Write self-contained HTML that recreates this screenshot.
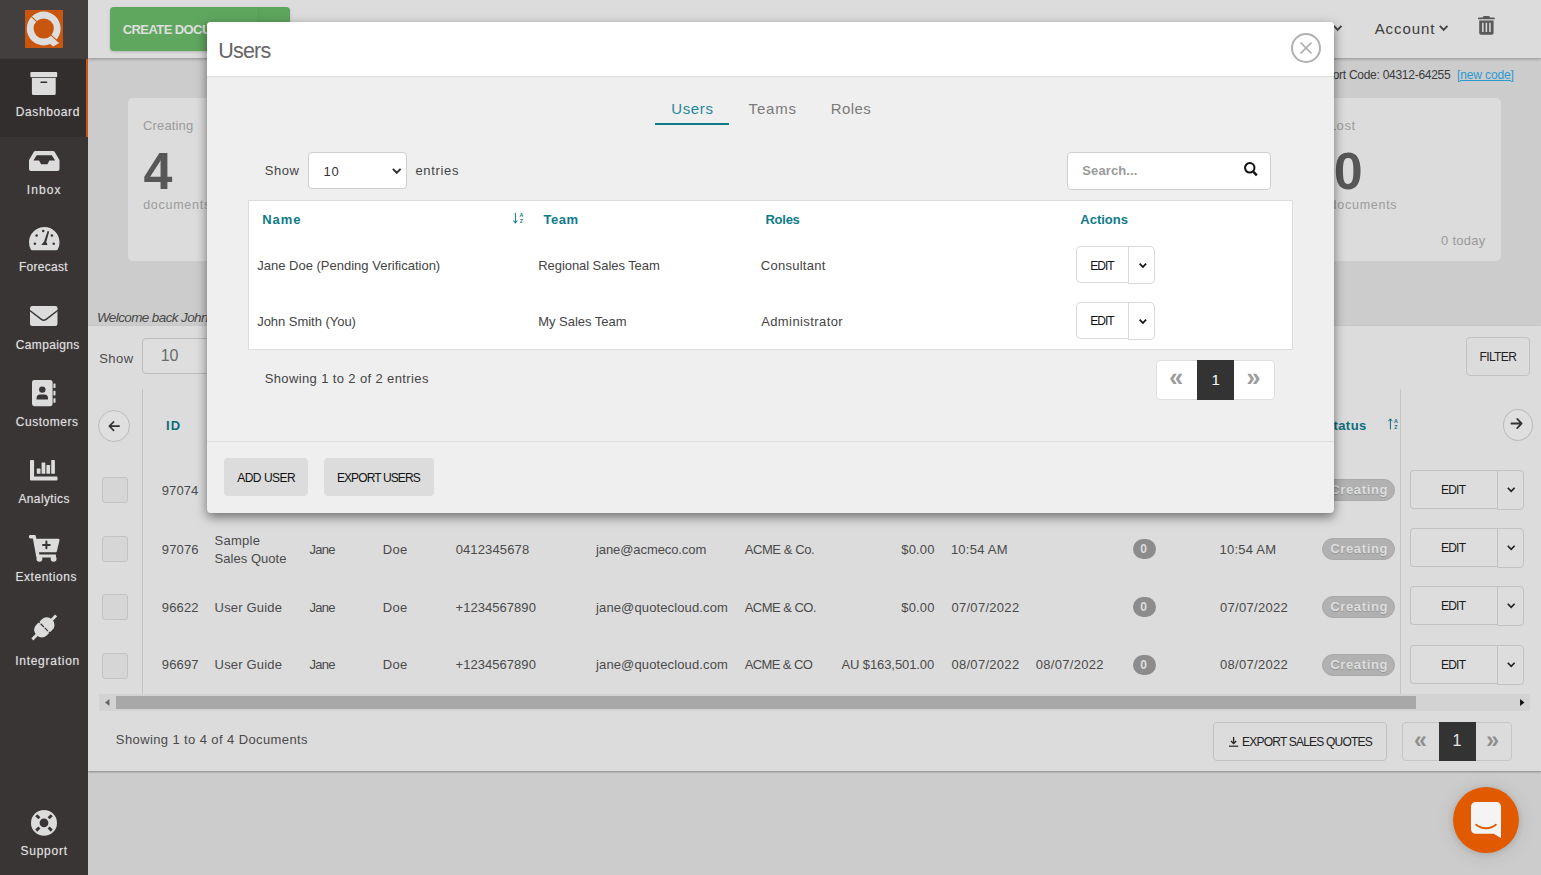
<!DOCTYPE html>
<html lang="en">
<head>
<meta charset="utf-8">
<title>QuoteCloud - Users</title>
<style>
*{box-sizing:border-box}
html,body{margin:0;padding:0}
body{width:1541px;height:875px;overflow:hidden;position:relative;background:#cccccc;font-family:"Liberation Sans", Arial, sans-serif;font-size:13px;color:#444}
.t{position:absolute;white-space:pre;line-height:1;display:block}
svg{position:absolute;display:block;overflow:visible}
#sidebar{position:absolute;left:0;top:0;width:88px;height:875px;background:#383534}
#sidebar .logo{position:absolute;left:0;top:0;width:88px;height:59px;background:#433f3e}
#sidebar .active-bg{position:absolute;left:0;top:59px;width:88px;height:78px;background:#312e2d;border-right:2px solid #c8560e}
.nav-item{display:block}
#topbar{position:absolute;left:88px;top:0;width:1453px;height:58px;background:#dcdcdc;box-shadow:0 1px 3px rgba(0,0,0,.3)}
.hcontent{position:absolute;left:-88px;top:0;width:0;height:0}
.btn-create{position:absolute;left:110px;top:7px;width:180px;height:44px;border-radius:4px;background:#5fa65f;box-shadow:0 1px 3px rgba(0,0,0,.18)}
.btn-create i{position:absolute;left:148px;top:0;width:32px;height:44px;background:rgba(0,0,0,.012);border-left:1px solid rgba(0,0,0,.045);border-radius:0 4px 4px 0}
.card{position:absolute;top:98px;height:163px;background:#dcdcdc;border-radius:5px}
#panel{position:absolute;left:88px;top:326px;width:1453px;height:445px;background:#dcdcdc;box-shadow:0 1px 2px rgba(0,0,0,.35)}
.pcontent{position:absolute;left:-88px;top:-326px;width:0;height:0}
.sel-bg{position:absolute;left:142px;top:338px;width:140px;height:36px;border:1px solid #bdbdbd;border-radius:4px;background:#dedede}
.btn-flat{position:absolute;border:1px solid #c2c2c2;border-radius:4px;background:#dcdcdc}
.vline{position:absolute;width:1px;background:#c4c4c4}
.circ{position:absolute;width:32px;height:32px;border-radius:50%;border:1px solid #bcbcbc;background:#dfdfdf}
.cb{position:absolute;width:26px;height:26px;border:1px solid #c3c3c3;border-radius:3px;background:#d6d6d6}
.cnt{position:absolute;width:23px;height:20px;border-radius:10px;background:#8c8c8c}
.pill{position:absolute;width:73px;height:22px;border-radius:11px;background:#b1b1b1;border:1px solid #a9a9a9}
.btn-edit{position:absolute;width:88px;height:39px;border:1px solid #c2c2c2;border-right:0;border-radius:4px 0 0 4px;background:#dddddd}
.btn-caret{position:absolute;width:27px;height:40px;border:1px solid #c2c2c2;border-radius:0 4px 4px 0;background:#dddddd}
.scroll{position:absolute;left:99px;top:694px;width:1431px;height:17px;background:#d3d3d3}
.scroll b{position:absolute;left:17px;top:2px;width:1300px;height:13px;background:#a8a8a8}
.pager{position:absolute;border:1px solid #c6c6c6;border-radius:4px}
.pager b{position:absolute;top:-1px;width:37px;background:#333}
#modal{position:absolute;left:207px;top:22px;width:1127px;height:491px;background:#efefef;border-radius:4px;box-shadow:0 4px 11px rgba(0,0,0,.5)}
#modal .mhead{position:absolute;left:0;top:0;width:1127px;height:55px;background:#fff;border-bottom:1px solid #dedede;border-radius:4px 4px 0 0}
#modal .mfoot{position:absolute;left:0;top:419px;width:1127px;height:72px;border-top:1px solid #dddddd}
.mcontent{position:absolute;left:-207px;top:-22px;width:0;height:0}
.close{position:absolute;left:1291px;top:33px;width:30px;height:30px;border-radius:50%;border:2px solid #b0b0b0}
.tabline{position:absolute;left:655px;top:123px;width:74px;height:2px;background:#0e7a8a}
.sel{position:absolute;left:308px;top:152px;width:99px;height:37px;border:1px solid #cfcfcf;border-radius:4px;background:#fff}
.search{position:absolute;left:1067px;top:152px;width:204px;height:38px;border:1px solid #cfcfcf;border-radius:4px;background:#fff}
.mtable{position:absolute;left:248px;top:200px;width:1045px;height:150px;border:1px solid #dcdcdc;background:#fff}
.mbtn-edit{position:absolute;width:53px;height:37px;border:1px solid #d9d9d9;border-right:0;border-radius:5px 0 0 5px;background:#fff}
.mbtn-caret{position:absolute;width:27px;height:38px;border:1px solid #d9d9d9;border-radius:0 5px 5px 0;background:#fff}
.mpager{position:absolute;left:1156px;top:360px;width:119px;height:40px;border:1px solid #dedede;border-radius:4px;background:#fff}
.mpager b{position:absolute;left:40px;top:-1px;width:37px;height:40px;background:#333}
.btn-grey{position:absolute;top:458px;height:38px;border-radius:4px;background:#dcdcdc}
#chat{position:absolute;left:1453px;top:787px;width:66px;height:66px;border-radius:50%;background:#e25a00;box-shadow:0 1px 6px rgba(0,0,0,.12),0 2px 20px rgba(0,0,0,.1)}
</style>
</head>
<body>

<main id="content">
  <span class="t" style="left:1305.70px;top:69px;font-size:12px;letter-spacing:-0.269px;color:#3a3a3a;">Support Code: 04312-64255</span>
  <a class="t" style="left:1456.99px;top:69px;font-size:12px;letter-spacing:-0.125px;color:#2a9bd3;text-decoration:underline;">[new code]</a>
  <section class="card" style="left:128px;width:216px">
    <span class="t" style="left:15.06px;top:21px;font-size:13px;letter-spacing:0.141px;color:#9b9b9b;">Creating</span>
    <span class="t" style="left:15.47px;top:47px;font-size:52px;font-weight:700;color:#575757;">4</span>
    <span class="t" style="left:15.15px;top:101px;font-size:12.5px;letter-spacing:0.733px;color:#9b9b9b;">documents</span>
  </section>
  <section class="card" style="left:359px;width:216px"></section>
  <section class="card" style="left:590px;width:216px"></section>
  <section class="card" style="left:821px;width:216px"></section>
  <section class="card" style="left:1052px;width:216px"></section>
  <section class="card" style="left:1285px;width:216px">
    <span class="t" style="left:43.82px;top:21px;font-size:13px;letter-spacing:0.563px;color:#9b9b9b;">Lost</span>
    <span class="t" style="left:48.67px;top:47px;font-size:52px;font-weight:700;color:#575757;">0</span>
    <span class="t" style="left:44.60px;top:101px;font-size:12.5px;letter-spacing:0.733px;color:#9b9b9b;">documents</span>
    <span class="t" style="left:156.02px;top:136px;font-size:13px;letter-spacing:0.263px;color:#9b9b9b;">0 today</span>
  </section>
  <span class="t" style="left:96.99px;top:311px;font-size:13.5px;font-style:italic;letter-spacing:-0.614px;color:#484848;">Welcome back John Smith</span>

  <section id="panel"><div class="pcontent">
  <span class="t" style="left:99.13px;top:352px;font-size:13px;letter-spacing:0.524px;color:#4a4a4a;">Show</span>
  <div class="sel-bg"></div>
  <span class="t" style="left:160.71px;top:348px;font-size:16px;letter-spacing:-0.075px;color:#6a6a6a;">10</span>
  <div class="btn-flat" style="left:1466px;top:337px;width:64px;height:39px"></div>
  <span class="t" style="left:1479.48px;top:351px;font-size:12px;letter-spacing:-0.624px;color:#222;">FILTER</span>

  <div class="vline" style="left:142px;top:389px;height:305px"></div>
  <div class="vline" style="left:1400px;top:389px;height:305px"></div>
  <div class="circ" style="left:98px;top:410px"><svg style="left:9px;top:10.2px" width="11.6" height="10.2" viewBox="0 0 12 10.4" preserveAspectRatio="none"><path d="M11.6 5.2H1.6M5.8.9L1.4 5.2l4.4 4.3" fill="none" stroke="#333" stroke-width="1.7" stroke-linecap="round" stroke-linejoin="round"/></svg></div>
  <div class="circ" style="left:1503px;top:409px;width:30px;height:32px"><svg style="left:7.4px;top:8.4px" width="12" height="11" viewBox="0 0 12 10.4" preserveAspectRatio="none"><path d="M.4 5.2h10M6.2.9l4.4 4.3l-4.4 4.3" fill="none" stroke="#333" stroke-width="1.7" stroke-linecap="round" stroke-linejoin="round"/></svg></div>
  <span class="t" style="left:165.97px;top:419px;font-size:13px;font-weight:700;letter-spacing:1.116px;color:#0d6c7b;">ID</span>
  <span class="t" style="left:1324.26px;top:419px;font-size:13px;font-weight:700;letter-spacing:0.459px;color:#0d6c7b;">Status</span>
  <svg style="left:1387.7px;top:418.4px" width="10.5" height="11.8" viewBox="0 0 10.5 11.8" preserveAspectRatio="none"><path d="M2.4 11.4V1M.4 3.2l2-2.4l2 2.4" fill="none" stroke="#0d6c7b" stroke-width="1"/><text x="8" y="4.9" font-size="5.4" font-weight="700" text-anchor="middle" fill="#0d6c7b" font-family="Liberation Sans, sans-serif">A</text><text x="8" y="11.2" font-size="5.4" font-weight="700" text-anchor="middle" fill="#0d6c7b" font-family="Liberation Sans, sans-serif">Z</text></svg>

  <div class="row"><i class="cb" style="left:102px;top:477px"></i><span class="t" style="left:161.81px;top:484px;font-size:13px;letter-spacing:0.089px;color:#4a4a4a;">97074</span><span class="t" style="left:214.58px;top:484px;font-size:13px;letter-spacing:0.244px;color:#4a4a4a;">Sample</span><span class="t" style="left:309.50px;top:484px;font-size:13px;letter-spacing:-0.731px;color:#4a4a4a;">Jane</span><span class="t" style="left:382.82px;top:484px;font-size:13px;letter-spacing:0.315px;color:#4a4a4a;">Doe</span><b class="pill" style="left:1322px;top:479px"></b><span class="t" style="left:1330.32px;top:483px;font-size:13px;font-weight:700;letter-spacing:0.624px;color:#dedede;text-shadow:0 1px 1px rgba(0,0,0,.18);">Creating</span><span class="btn-edit" style="left:1410px;top:470px"></span><span class="btn-caret" style="left:1497px;top:470px"><svg style="left:9.2px;top:16.2px" width="8.4" height="5.6" viewBox="0 0 10 6.5" preserveAspectRatio="none"><path d="M.9.9L5 5L9.1.9" fill="none" stroke="#222" stroke-width="1.7" vector-effect="non-scaling-stroke" stroke-linecap="butt" stroke-linejoin="miter"/></svg></span><span class="t" style="left:1440.88px;top:484px;font-size:12px;letter-spacing:-0.733px;color:#1a1a1a;">EDIT</span></div>
<div class="row"><i class="cb" style="left:102px;top:536px"></i><span class="t" style="left:161.81px;top:543px;font-size:13px;letter-spacing:0.140px;color:#4a4a4a;">97076</span><span class="t" style="left:214.58px;top:534px;font-size:13px;letter-spacing:0.244px;color:#4a4a4a;">Sample</span><span class="t" style="left:214.58px;top:552px;font-size:13px;letter-spacing:0.031px;color:#4a4a4a;">Sales Quote</span><span class="t" style="left:309.50px;top:543px;font-size:13px;letter-spacing:-0.731px;color:#4a4a4a;">Jane</span><span class="t" style="left:382.82px;top:543px;font-size:13px;letter-spacing:0.315px;color:#4a4a4a;">Doe</span><span class="t" style="left:455.67px;top:543px;font-size:13px;letter-spacing:0.128px;color:#4a4a4a;">0412345678</span><span class="t" style="left:596.06px;top:543px;font-size:13px;letter-spacing:-0.091px;color:#4a4a4a;">jane@acmeco.com</span><span class="t" style="left:744.67px;top:543px;font-size:13px;letter-spacing:-0.408px;color:#4a4a4a;">ACME &amp; Co.</span><span class="t" style="left:901.28px;top:543px;font-size:13px;letter-spacing:0.166px;color:#4a4a4a;">$0.00</span><span class="t" style="left:950.88px;top:543px;font-size:13px;letter-spacing:0.245px;color:#4a4a4a;">10:54 AM</span><b class="cnt" style="left:1133px;top:539px"><span class="t" style="left:7.17px;top:4px;font-size:12px;font-weight:700;color:#dcdcdc;">0</span></b><span class="t" style="left:1219.48px;top:543px;font-size:13px;letter-spacing:0.245px;color:#4a4a4a;">10:54 AM</span><b class="pill" style="left:1322px;top:538px"></b><span class="t" style="left:1330.32px;top:542px;font-size:13px;font-weight:700;letter-spacing:0.624px;color:#dedede;text-shadow:0 1px 1px rgba(0,0,0,.18);">Creating</span><span class="btn-edit" style="left:1410px;top:528px"></span><span class="btn-caret" style="left:1497px;top:528px"><svg style="left:9.2px;top:16.2px" width="8.4" height="5.6" viewBox="0 0 10 6.5" preserveAspectRatio="none"><path d="M.9.9L5 5L9.1.9" fill="none" stroke="#222" stroke-width="1.7" vector-effect="non-scaling-stroke" stroke-linecap="butt" stroke-linejoin="miter"/></svg></span><span class="t" style="left:1440.88px;top:542px;font-size:12px;letter-spacing:-0.733px;color:#1a1a1a;">EDIT</span></div>
<div class="row"><i class="cb" style="left:102px;top:594px"></i><span class="t" style="left:161.81px;top:601px;font-size:13px;letter-spacing:0.138px;color:#4a4a4a;">96622</span><span class="t" style="left:214.57px;top:601px;font-size:13px;letter-spacing:0.186px;color:#4a4a4a;">User Guide</span><span class="t" style="left:309.50px;top:601px;font-size:13px;letter-spacing:-0.731px;color:#4a4a4a;">Jane</span><span class="t" style="left:382.82px;top:601px;font-size:13px;letter-spacing:0.315px;color:#4a4a4a;">Doe</span><span class="t" style="left:455.59px;top:601px;font-size:13px;letter-spacing:0.040px;color:#4a4a4a;">+1234567890</span><span class="t" style="left:596.06px;top:601px;font-size:13px;letter-spacing:0.123px;color:#4a4a4a;">jane@quotecloud.com</span><span class="t" style="left:744.67px;top:601px;font-size:13px;letter-spacing:-0.520px;color:#4a4a4a;">ACME &amp; CO.</span><span class="t" style="left:901.28px;top:601px;font-size:13px;letter-spacing:0.166px;color:#4a4a4a;">$0.00</span><span class="t" style="left:951.42px;top:601px;font-size:13px;letter-spacing:0.295px;color:#4a4a4a;">07/07/2022</span><b class="cnt" style="left:1133px;top:597px"><span class="t" style="left:7.17px;top:4px;font-size:12px;font-weight:700;color:#dcdcdc;">0</span></b><span class="t" style="left:1220.02px;top:601px;font-size:13px;letter-spacing:0.295px;color:#4a4a4a;">07/07/2022</span><b class="pill" style="left:1322px;top:596px"></b><span class="t" style="left:1330.32px;top:600px;font-size:13px;font-weight:700;letter-spacing:0.624px;color:#dedede;text-shadow:0 1px 1px rgba(0,0,0,.18);">Creating</span><span class="btn-edit" style="left:1410px;top:586px"></span><span class="btn-caret" style="left:1497px;top:586px"><svg style="left:9.2px;top:16.2px" width="8.4" height="5.6" viewBox="0 0 10 6.5" preserveAspectRatio="none"><path d="M.9.9L5 5L9.1.9" fill="none" stroke="#222" stroke-width="1.7" vector-effect="non-scaling-stroke" stroke-linecap="butt" stroke-linejoin="miter"/></svg></span><span class="t" style="left:1440.88px;top:600px;font-size:12px;letter-spacing:-0.733px;color:#1a1a1a;">EDIT</span></div>
<div class="row"><i class="cb" style="left:102px;top:653px"></i><span class="t" style="left:161.81px;top:658px;font-size:13px;letter-spacing:0.138px;color:#4a4a4a;">96697</span><span class="t" style="left:214.57px;top:658px;font-size:13px;letter-spacing:0.186px;color:#4a4a4a;">User Guide</span><span class="t" style="left:309.50px;top:658px;font-size:13px;letter-spacing:-0.731px;color:#4a4a4a;">Jane</span><span class="t" style="left:382.82px;top:658px;font-size:13px;letter-spacing:0.315px;color:#4a4a4a;">Doe</span><span class="t" style="left:455.59px;top:658px;font-size:13px;letter-spacing:0.040px;color:#4a4a4a;">+1234567890</span><span class="t" style="left:596.06px;top:658px;font-size:13px;letter-spacing:0.123px;color:#4a4a4a;">jane@quotecloud.com</span><span class="t" style="left:744.67px;top:658px;font-size:13px;letter-spacing:-0.600px;color:#4a4a4a;">ACME &amp; CO</span><span class="t" style="left:841.42px;top:658px;font-size:13px;letter-spacing:-0.091px;color:#4a4a4a;">AU $163,501.00</span><span class="t" style="left:951.42px;top:658px;font-size:13px;letter-spacing:0.295px;color:#4a4a4a;">08/07/2022</span><span class="t" style="left:1035.72px;top:658px;font-size:13px;letter-spacing:0.295px;color:#4a4a4a;">08/07/2022</span><b class="cnt" style="left:1133px;top:655px"><span class="t" style="left:7.17px;top:4px;font-size:12px;font-weight:700;color:#dcdcdc;">0</span></b><span class="t" style="left:1220.02px;top:658px;font-size:13px;letter-spacing:0.295px;color:#4a4a4a;">08/07/2022</span><b class="pill" style="left:1322px;top:654px"></b><span class="t" style="left:1330.32px;top:658px;font-size:13px;font-weight:700;letter-spacing:0.624px;color:#dedede;text-shadow:0 1px 1px rgba(0,0,0,.18);">Creating</span><span class="btn-edit" style="left:1410px;top:645px"></span><span class="btn-caret" style="left:1497px;top:645px"><svg style="left:9.2px;top:16.2px" width="8.4" height="5.6" viewBox="0 0 10 6.5" preserveAspectRatio="none"><path d="M.9.9L5 5L9.1.9" fill="none" stroke="#222" stroke-width="1.7" vector-effect="non-scaling-stroke" stroke-linecap="butt" stroke-linejoin="miter"/></svg></span><span class="t" style="left:1440.88px;top:659px;font-size:12px;letter-spacing:-0.733px;color:#1a1a1a;">EDIT</span></div>

  <div class="scroll"><b></b>
    <svg style="left:6px;top:5px" width="4.5" height="7" viewBox="0 0 5 8"><path d="M5 0v8L0 4z" fill="#666"/></svg>
    <svg style="left:1421px;top:5px" width="4.5" height="7" viewBox="0 0 5 8"><path d="M0 0v8l5-4z" fill="#111"/></svg>
  </div>
  <span class="t" style="left:115.83px;top:733px;font-size:13px;letter-spacing:0.395px;color:#4a4a4a;">Showing 1 to 4 of 4 Documents</span>
  <div class="btn-flat" style="left:1213px;top:722px;width:174px;height:39px"></div>
  <svg style="left:1228.8px;top:736.9px" width="9.2" height="9.8" viewBox="0 0 9.2 9.8" preserveAspectRatio="none"><path d="M4.6 0v6.2M2 4l2.6 2.6L7.2 4" fill="none" stroke="#222" stroke-width="1.3"/><path d="M0 9.2h9.2" stroke="#222" stroke-width="1.2"/></svg>
  <span class="t" style="left:1242.08px;top:736px;font-size:12px;letter-spacing:-0.794px;color:#222;">EXPORT SALES QUOTES</span>
  <div class="pager" style="left:1402px;top:722px;width:110px;height:39px"><b style="left:36px;height:39px"></b></div>
  <span class="t" style="left:1414.04px;top:729px;font-size:23px;font-weight:700;color:#8f8f8f;">«</span>
  <span class="t" style="left:1452.51px;top:733px;font-size:16px;color:#e8e8e8;">1</span>
  <span class="t" style="left:1486.18px;top:729px;font-size:23px;font-weight:700;color:#8f8f8f;">»</span>
  </div></section>
</main>

<header id="topbar"><div class="hcontent">
<div class="btn-create"><i></i></div>
<span class="t" style="left:122.72px;top:23px;font-size:13px;font-weight:700;letter-spacing:-0.579px;color:#dedede;">CREATE DOCUMENT</span>
<span class="t" style="left:1268.71px;top:21px;font-size:15px;letter-spacing:0.512px;color:#444;">Settings</span>
<svg style="left:1333px;top:25.4px" width="9.3" height="6.3" viewBox="0 0 10 6.5" preserveAspectRatio="none"><path d="M.9.9L5 5L9.1.9" fill="none" stroke="#444" stroke-width="2" vector-effect="non-scaling-stroke" stroke-linecap="butt" stroke-linejoin="miter"/></svg>
<span class="t" style="left:1374.68px;top:21px;font-size:15px;letter-spacing:0.923px;color:#3c3c3c;">Account</span>
<svg style="left:1439.2px;top:25.4px" width="9.3" height="6.3" viewBox="0 0 10 6.5" preserveAspectRatio="none"><path d="M.9.9L5 5L9.1.9" fill="none" stroke="#444" stroke-width="2" vector-effect="non-scaling-stroke" stroke-linecap="butt" stroke-linejoin="miter"/></svg>
<svg style="left:1477.8px;top:16.4px" width="16.8" height="18.7" viewBox="0 0 16.8 18.7" preserveAspectRatio="none"><path fill="#5a5a5a" d="M5.6 0h5.6l.9 1.4h3.9a.8.8 0 0 1 .8.8v1.1h-16.8v-1.1a.8.8 0 0 1 .8-.8h3.9z"/><path fill-rule="evenodd" fill="#5a5a5a" d="M1.2 4.6h14.4v12.3a1.8 1.8 0 0 1-1.8 1.8h-10.8a1.8 1.8 0 0 1-1.8-1.8zM4.1 6.8v9.2h1.5v-9.2zM7.65 6.8v9.2h1.5v-9.2zM11.2 6.8v9.2h1.5v-9.2z"/></svg>
</div></header>

<aside id="sidebar">
  <div class="logo"><svg style="left:25px;top:10px" width="38" height="38" viewBox="0 0 38 38" preserveAspectRatio="none"><rect width="38" height="38" fill="#c8560e"/><path fill-rule="evenodd" fill="#dddddd" d="M18.7 1.6a16.9 16.9 0 1 0 0 33.8a16.9 16.9 0 1 0 0-33.8zM18.7 8.4a10.1 10.1 0 1 1 0 20.2a10.1 10.1 0 1 1 0-20.2z"/><path fill="#dddddd" d="M24.5 33.6l3.6 2.8l6.2-3.4l-4.6-4.6z"/><path d="M6.4 6.6l5.4 5M25.8 24.8l8.2 7.6" stroke="#c8560e" stroke-width="1.1" fill="none"/></svg></div>
  <div class="active-bg"></div>
  <a class="nav-item active"><svg style="left:30px;top:71.75px" width="27.5" height="23.25" viewBox="0 0 27.5 23.25" preserveAspectRatio="none"><rect x="0.4" y="0" width="26.8" height="5.3" rx="1" fill="#dcdcdc"/><path d="M1.9 5.9h23.8v15.6a1.6 1.6 0 0 1-1.6 1.6h-20.6a1.6 1.6 0 0 1-1.6-1.6z" fill="#dcdcdc"/><rect x="10.4" y="9.6" width="6.9" height="1.5" rx=".6" fill="#312e2d"/></svg><span class="t" style="left:15.68px;top:106px;font-size:12px;letter-spacing:0.624px;color:#dedede;text-shadow:0 0 1px rgba(222,222,222,.55);">Dashboard</span></a>
<a class="nav-item"><svg style="left:28.75px;top:151.25px" width="30.5" height="20.0" viewBox="0 0 30.2 19.6" preserveAspectRatio="none"><path fill-rule="evenodd" fill="#dcdcdc" d="M6.4 0h17.4a2 2 0 0 1 1.7 1l4.5 7.6a2 2 0 0 1 .2.9v8.1a2 2 0 0 1-2 2h-26.2a2 2 0 0 1-2-2v-8.1a2 2 0 0 1 .2-.9l4.5-7.6a2 2 0 0 1 1.7-1zM7.6 4.1l-3.2 5.2h5.6l2 3.7h6.2l2-3.7h5.6l-3.2-5.2z"/></svg><span class="t" style="left:26.75px;top:184px;font-size:12px;letter-spacing:1.075px;color:#dedede;text-shadow:0 0 1px rgba(222,222,222,.55);">Inbox</span></a>
<a class="nav-item"><svg style="left:28.75px;top:226.75px" width="30.5" height="23.25" viewBox="0 0 30.5 23.25" preserveAspectRatio="none"><path fill="#dcdcdc" d="M15.25 0a15.25 15.25 0 0 1 15.25 15.25c0 2.5-.6 4.9-1.7 7a1.8 1.8 0 0 1-1.6 1h-23.9a1.8 1.8 0 0 1-1.6-1a15.25 15.25 0 0 1 13.55-22.25z"/><g fill="#383534"><circle cx="5.9" cy="16.8" r="1.25"/><circle cx="7.6" cy="8.4" r="1.25"/><circle cx="14.2" cy="3.9" r="1.25"/><circle cx="22.9" cy="8.4" r="1.25"/><circle cx="24.7" cy="16.8" r="1.25"/><path d="M18.6 4.1l1.6 .5l-2.9 10.4l1.2 3h-6.2l2.8-3.6z"/></g></svg><span class="t" style="left:18.88px;top:261px;font-size:12px;letter-spacing:0.306px;color:#dedede;text-shadow:0 0 1px rgba(222,222,222,.55);">Forecast</span></a>
<a class="nav-item"><svg style="left:30px;top:306px" width="27.5" height="20" viewBox="0 0 27.5 20" preserveAspectRatio="none"><rect width="27.5" height="20" rx="2.3" fill="#dcdcdc"/><path d="M-0.5 4.2l11.9 9.2a3.8 3.8 0 0 0 4.7 0l11.9-9.2" stroke="#383534" stroke-width="1.4" fill="none"/></svg><span class="t" style="left:15.84px;top:339px;font-size:12px;letter-spacing:0.351px;color:#dedede;text-shadow:0 0 1px rgba(222,222,222,.55);">Campaigns</span></a>
<a class="nav-item"><svg style="left:32px;top:380px" width="23.5" height="26.25" viewBox="0 0 23.5 26.25" preserveAspectRatio="none"><rect x="0" y="0" width="20.6" height="26.25" rx="2.4" fill="#dcdcdc"/><rect x="21.4" y="3.4" width="2.1" height="4.6" rx=".6" fill="#dcdcdc"/><rect x="21.4" y="10.8" width="2.1" height="4.6" rx=".6" fill="#dcdcdc"/><rect x="21.4" y="18.2" width="2.1" height="4.6" rx=".6" fill="#dcdcdc"/><circle cx="10.3" cy="9.6" r="3.2" fill="#383534"/><path d="M4.6 19.6v-1.4a3.6 3.6 0 0 1 3.6-3.6h4.2a3.6 3.6 0 0 1 3.6 3.6v1.4z" fill="#383534"/></svg><span class="t" style="left:15.84px;top:416px;font-size:12px;letter-spacing:0.511px;color:#dedede;text-shadow:0 0 1px rgba(222,222,222,.55);">Customers</span></a>
<a class="nav-item"><svg style="left:30px;top:459.75px" width="27.5" height="20.5" viewBox="0 0 27.5 20.5" preserveAspectRatio="none"><path fill="#dcdcdc" d="M0 .9a.9.9 0 0 1 .9-.9h2.3a.9.9 0 0 1 .9.9v15.7h22.5a.9.9 0 0 1 .9.9v2.1a.9.9 0 0 1-.9.9h-25.7a.9.9 0 0 1-.9-.9z"/><g fill="#dcdcdc"><rect x="6.8" y="8.6" width="3.7" height="5.2" rx=".6"/><rect x="11.6" y="2.6" width="3.7" height="11.2" rx=".6"/><rect x="16.4" y="5" width="3.7" height="8.8" rx=".6"/><rect x="21.2" y="0" width="3.7" height="13.8" rx=".6"/></g></svg><span class="t" style="left:18.43px;top:493px;font-size:12px;letter-spacing:0.375px;color:#dedede;text-shadow:0 0 1px rgba(222,222,222,.55);">Analytics</span></a>
<a class="nav-item"><svg style="left:28.75px;top:534.75px" width="30.5" height="26.75" viewBox="0 0 30.5 26.75" preserveAspectRatio="none"><path fill="#dcdcdc" d="M1.1 0h4.5a1.2 1.2 0 0 1 1.2 1l.5 2.8h22a1.2 1.2 0 0 1 1.2 1.5l-2.6 11a1.2 1.2 0 0 1-1.2.9h-16.7l.4 2.2h15.6a1.1 1.1 0 0 1 1.1 1.4l-.2.8a1.1 1.1 0 0 1-1.1.9h-17.4a1.2 1.2 0 0 1-1.2-1l-3.3-18.1h-2.8a1.1 1.1 0 0 1-1.1-1.1v-1.2a1.1 1.1 0 0 1 1.1-1.1z"/><circle cx="10.4" cy="23.8" r="2.95" fill="#dcdcdc"/><circle cx="24.6" cy="23.8" r="2.95" fill="#dcdcdc"/><path d="M17.4 6.5v6.8M14 9.9h6.8" stroke="#383534" stroke-width="2" stroke-linecap="round"/></svg><span class="t" style="left:15.38px;top:571px;font-size:12px;letter-spacing:0.561px;color:#dedede;text-shadow:0 0 1px rgba(222,222,222,.55);">Extentions</span></a>
<a class="nav-item"><svg style="left:31px;top:613.5px" width="26.5" height="27.0" viewBox="0 0 26.5 27" preserveAspectRatio="none"><g transform="rotate(-45 13.3 13.4)"><rect x="2.3" y="5.9" width="22" height="15" rx="6.9" fill="#dcdcdc"/><path d="M-3.6 13.4h6.4M23.8 13.4h6.2" stroke="#dcdcdc" stroke-width="2.9"/><path d="M13.3 4.6v17.6" stroke="#383534" stroke-width="1.2" stroke-dasharray="2.4 1.2 4.6 1.2 4.6 1.2 2.4 0"/></g></svg><span class="t" style="left:15.15px;top:655px;font-size:12px;letter-spacing:0.739px;color:#dedede;text-shadow:0 0 1px rgba(222,222,222,.55);">Integration</span></a>
<a class="nav-item"><svg style="left:30.9px;top:809.6px" width="26.0" height="25.799999999999955" viewBox="0 0 26 26" preserveAspectRatio="none"><circle cx="13" cy="13" r="13" fill="#dcdcdc"/><circle cx="13" cy="13" r="4.4" fill="#383534"/><g fill="#383534"><rect x="19.5" y="11.55" width="4.5" height="2.9" transform="rotate(45 13 13)"/><rect x="19.5" y="11.55" width="4.5" height="2.9" transform="rotate(135 13 13)"/><rect x="19.5" y="11.55" width="4.5" height="2.9" transform="rotate(225 13 13)"/><rect x="19.5" y="11.55" width="4.5" height="2.9" transform="rotate(315 13 13)"/></g></svg><span class="t" style="left:20.40px;top:845px;font-size:12px;letter-spacing:0.793px;color:#dedede;text-shadow:0 0 1px rgba(222,222,222,.55);">Support</span></a>

</aside>

<div id="chat"><svg style="left:18px;top:14.7px" width="30" height="36" viewBox="0 0 30 36" preserveAspectRatio="none"><path fill="#f4f4f4" d="M4.6 0h20.8a4.6 4.6 0 0 1 4.6 4.6v31.4l-7.4-4.2h-18a4.6 4.6 0 0 1-4.6-4.6v-22.6a4.6 4.6 0 0 1 4.6-4.6z"/><path d="M5.2 22.8c5.6 4.6 14 4.6 19.6 0" fill="none" stroke="#e25a00" stroke-width="1.9" stroke-linecap="round"/></svg></div>

<div id="modal" role="dialog" aria-label="Users">
  <div class="mhead"></div>
  <div class="mfoot"></div>
<div class="mcontent">
  <h4 class="t" style="left:218.14px;top:41px;font-size:21.5px;letter-spacing:-0.763px;color:#666;margin:0;font-weight:400;">Users</h4>
  <div class="close"><svg style="left:7px;top:7px" width="12" height="12" viewBox="0 0 12 12" preserveAspectRatio="none"><path d="M.6.6l10.8 10.8M11.4.6L.6 11.4" stroke="#b0b0b0" stroke-width="1.7" fill="none"/></svg></div>
  <span class="t" style="left:671.25px;top:101px;font-size:15px;letter-spacing:0.637px;color:#24889a;">Users</span>
  <div class="tabline"></div>
  <span class="t" style="left:748.61px;top:101px;font-size:15px;letter-spacing:0.796px;color:#7a7a7a;">Teams</span>
  <span class="t" style="left:830.70px;top:101px;font-size:15px;letter-spacing:0.398px;color:#7a7a7a;">Roles</span>

  <span class="t" style="left:264.63px;top:164px;font-size:13px;letter-spacing:0.591px;color:#444;">Show</span>
  <div class="sel"><svg style="left:82.5px;top:15.4px" width="9.5" height="6.2" viewBox="0 0 10 6.5" preserveAspectRatio="none"><path d="M.9.9L5 5L9.1.9" fill="none" stroke="#333" stroke-width="2" vector-effect="non-scaling-stroke" stroke-linecap="butt" stroke-linejoin="miter"/></svg></div>
  <span class="t" style="left:323.38px;top:165px;font-size:13px;letter-spacing:0.906px;color:#333;">10</span>
  <span class="t" style="left:415.39px;top:164px;font-size:13px;letter-spacing:0.679px;color:#444;">entries</span>
  <div class="search"><svg style="left:176px;top:9.2px" width="13.8" height="14.4" viewBox="0 0 14.4 14.8" preserveAspectRatio="none"><circle cx="6" cy="6" r="4.9" fill="none" stroke="#111" stroke-width="2.1"/><path d="M9.9 10.1l3.5 3.7" stroke="#111" stroke-width="2.5" stroke-linecap="butt"/></svg></div>
  <span class="t" style="left:1082.26px;top:164px;font-size:13px;font-weight:700;letter-spacing:0.113px;color:#9a9a9a;">Search...</span>

  <div class="mtable"></div>
  <span class="t" style="left:262.17px;top:213px;font-size:13px;font-weight:700;letter-spacing:0.973px;color:#0e7a8a;">Name</span>
  <svg style="left:513.3px;top:212px" width="11.2" height="12" viewBox="0 0 11.2 11.3" preserveAspectRatio="none"><path d="M2.4.6v9.6M.4 8l2 2.4l2-2.4" fill="none" stroke="#0e7a8a" stroke-width="1"/><text x="8.4" y="4.6" font-size="5.4" font-weight="700" text-anchor="middle" fill="#0e7a8a" font-family="Liberation Sans, sans-serif">A</text><text x="8.4" y="10.8" font-size="5.4" font-weight="700" text-anchor="middle" fill="#0e7a8a" font-family="Liberation Sans, sans-serif">Z</text></svg>
  <span class="t" style="left:543.58px;top:213px;font-size:13px;font-weight:700;letter-spacing:0.520px;color:#0e7a8a;">Team</span>
  <span class="t" style="left:765.47px;top:213px;font-size:13px;font-weight:700;letter-spacing:-0.258px;color:#0e7a8a;">Roles</span>
  <span class="t" style="left:1080.27px;top:213px;font-size:13px;font-weight:700;color:#0e7a8a;">Actions</span>
  <div class="mrow"><span class="t" style="left:257.20px;top:259px;font-size:13px;letter-spacing:0.006px;color:#444;">Jane Doe (Pending Verification)</span><span class="t" style="left:538.22px;top:259px;font-size:13px;letter-spacing:-0.058px;color:#444;">Regional Sales Team</span><span class="t" style="left:760.81px;top:259px;font-size:13px;letter-spacing:0.261px;color:#444;">Consultant</span><span class="mbtn-edit" style="left:1076px;top:246px"></span><span class="mbtn-caret" style="left:1128px;top:246px"><svg style="left:9.6px;top:15.8px" width="7.8" height="5.2" viewBox="0 0 10 6.5" preserveAspectRatio="none"><path d="M.9.9L5 5L9.1.9" fill="none" stroke="#111" stroke-width="1.7" vector-effect="non-scaling-stroke" stroke-linecap="butt" stroke-linejoin="miter"/></svg></span><span class="t" style="left:1090.18px;top:260px;font-size:12px;letter-spacing:-0.966px;color:#111;">EDIT</span></div>
<div class="mrow"><span class="t" style="left:257.20px;top:315px;font-size:13px;letter-spacing:-0.035px;color:#444;">John Smith (You)</span><span class="t" style="left:538.22px;top:315px;font-size:13px;letter-spacing:-0.024px;color:#444;">My Sales Team</span><span class="t" style="left:761.17px;top:315px;font-size:13px;letter-spacing:0.407px;color:#444;">Administrator</span><span class="mbtn-edit" style="left:1076px;top:302px"></span><span class="mbtn-caret" style="left:1128px;top:302px"><svg style="left:9.6px;top:15.8px" width="7.8" height="5.2" viewBox="0 0 10 6.5" preserveAspectRatio="none"><path d="M.9.9L5 5L9.1.9" fill="none" stroke="#111" stroke-width="1.7" vector-effect="non-scaling-stroke" stroke-linecap="butt" stroke-linejoin="miter"/></svg></span><span class="t" style="left:1090.18px;top:315px;font-size:12px;letter-spacing:-0.966px;color:#111;">EDIT</span></div>

  <span class="t" style="left:264.63px;top:372px;font-size:13px;letter-spacing:0.378px;color:#444;">Showing 1 to 2 of 2 entries</span>
  <div class="mpager"><b></b></div>
  <span class="t" style="left:1169.21px;top:365px;font-size:25px;font-weight:700;color:#9c9c9c;">«</span>
  <span class="t" style="left:1211.38px;top:372px;font-size:15px;color:#fff;">1</span>
  <span class="t" style="left:1246.39px;top:365px;font-size:25px;font-weight:700;color:#9c9c9c;">»</span>

  <div class="btn-grey" style="left:224px;width:84px"></div>
  <span class="t" style="left:237.18px;top:472px;font-size:12px;letter-spacing:-0.489px;color:#111;">ADD USER</span>
  <div class="btn-grey" style="left:324px;width:110px"></div>
  <span class="t" style="left:336.88px;top:472px;font-size:12px;letter-spacing:-0.880px;color:#111;">EXPORT USERS</span>
</div>
</div>
</body>
</html>
